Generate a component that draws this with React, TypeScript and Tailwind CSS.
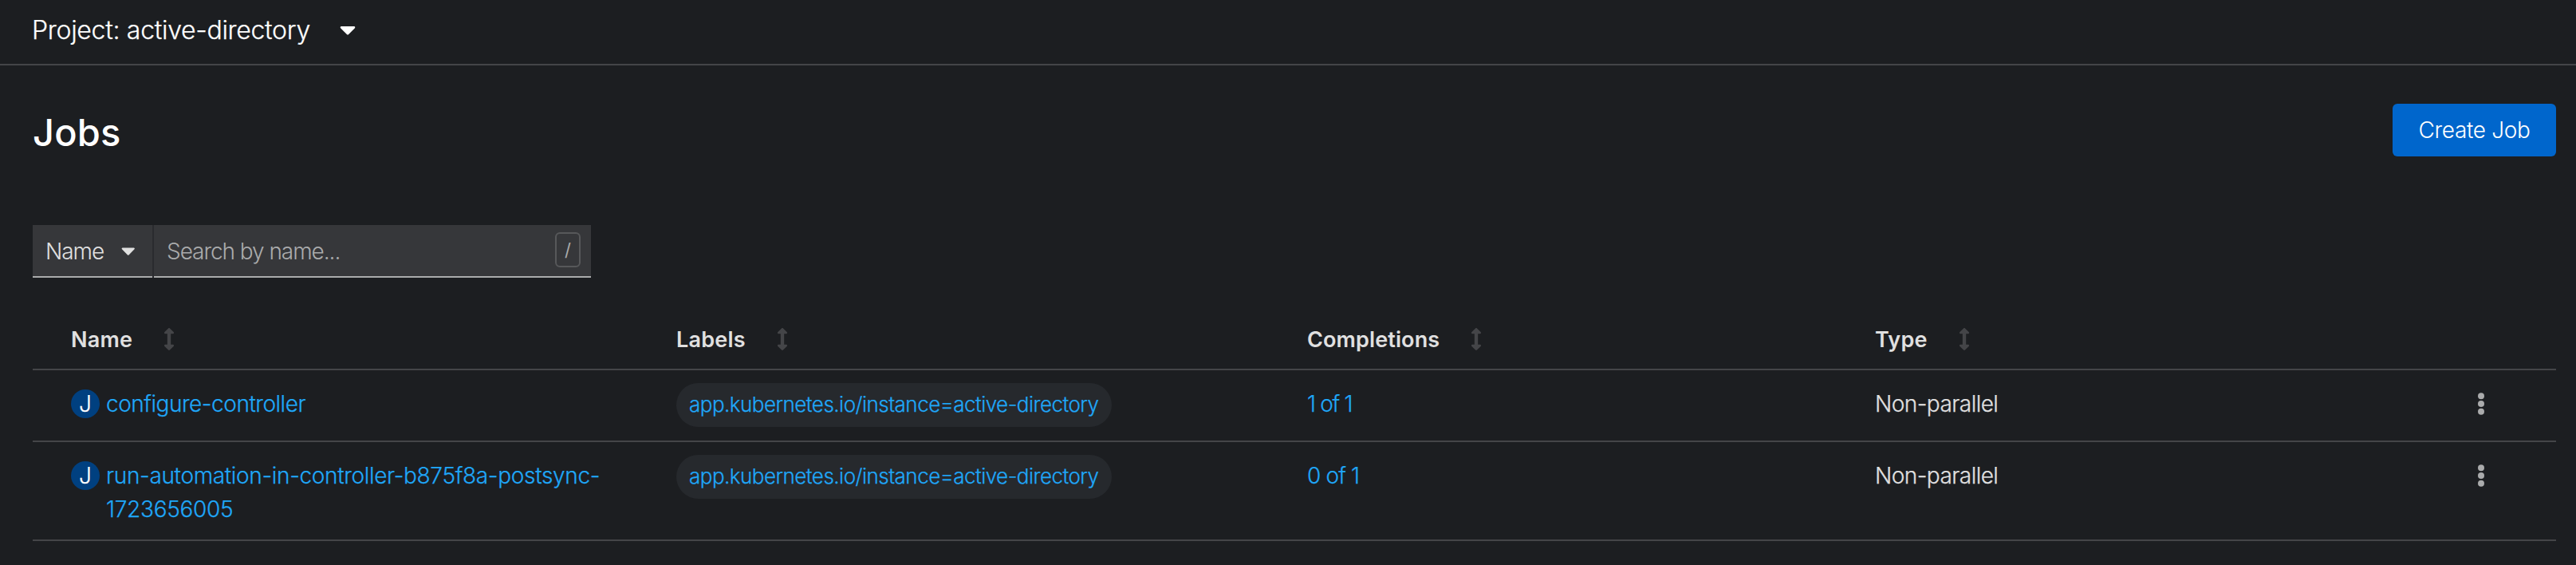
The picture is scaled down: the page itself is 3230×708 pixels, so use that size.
import React from "react";
import { FaArrowsAltV, FaCaretDown } from "react-icons/fa";

const COLUMNS = "grid grid-cols-[759px_791px_712px_756px_1fr] border-b-2 border-[#444548] pl-12";

const HEADERS = [
  { label: "Name", width: "w-[117px]", tracking: "tracking-[0.2px]" },
  { label: "Labels", width: "w-[127px]", tracking: "tracking-[0.2px]" },
  { label: "Completions", width: "w-[206px]", tracking: "tracking-[0.12px]" },
  { label: "Type", width: "w-[106px]", tracking: "tracking-[0.2px]" },
];

type Job = {
  name: string[];
  nameTracking: string[];
  label: string;
  completions: string;
  completionsTracking: string;
  type: string;
  height: string;
};

const JOBS: Job[] = [
  {
    name: ["configure-controller"],
    nameTracking: ["tracking-[-0.47px]"],
    label: "app.kubernetes.io/instance=active-directory",
    completions: "1 of 1",
    completionsTracking: "tracking-[-1.3px]",
    type: "Non-parallel",
    height: "h-[90px]",
  },
  {
    name: ["run-automation-in-controller-b875f8a-postsync-", "1723656005"],
    nameTracking: ["tracking-[-0.33px]", "tracking-[-0.3px]"],
    label: "app.kubernetes.io/instance=active-directory",
    completions: "0 of 1",
    completionsTracking: "tracking-[-0.86px]",
    type: "Non-parallel",
    height: "h-[124px]",
  },
];

function Kebab() {
  return (
    <svg className="mt-[7px] h-7 w-2 fill-[#aaabac]" viewBox="0 0 8 28">
      <circle cx="4" cy="4.3" r="4" />
      <circle cx="4" cy="14" r="4" />
      <circle cx="4" cy="23.7" r="4" />
    </svg>
  );
}

function JobRow({ job }: { job: Job }) {
  return (
    <div className={`${COLUMNS} ${job.height} items-start pt-[21px] text-[28px] leading-[42px] font-light [-webkit-text-stroke:0.25px]`}>
      <div className="flex gap-2 text-[#1fa7f8]">
        <span className="mt-[3px] flex size-9 shrink-0 items-center justify-center rounded-full bg-[#004080] leading-9 text-white">
          J
        </span>
        <a className="whitespace-nowrap">
          {job.name.map((line, i) => (
            <span key={line} className={`block ${job.nameTracking[i]}`}>
              {line}
            </span>
          ))}
        </a>
      </div>
      <div className="-mt-[5px]">
        <a className="flex h-[55px] w-[546px] items-center rounded-full bg-[#26292d] pb-px pl-4 text-[26px] tracking-[-0.53px] whitespace-nowrap text-[#1fa7f8]">
          {job.label}
        </a>
      </div>
      <a className={`text-[#1fa7f8] ${job.completionsTracking}`}>{job.completions}</a>
      <span className="tracking-[-0.54px]">{job.type}</span>
      <Kebab />
    </div>
  );
}

export default function App() {
  return (
    <div className="h-[708px] w-[3230px] overflow-hidden bg-[#1c1e21] font-['Inter',sans-serif] text-[#e0e0e0]">
      <header className="flex h-[82px] items-start gap-[37px] border-b-2 border-[#444548] pt-[13px] pl-10 text-white">
        <span className="w-[349px] text-[32px] leading-[49px] font-light tracking-[-0.3px] whitespace-nowrap [-webkit-text-stroke:0.25px]">
          Project: active-directory
        </span>
        <FaCaretDown className="mt-2 h-8 w-5" />
      </header>

      <main className="pr-[25px] pl-[41px]">
        <div className="flex items-start justify-between pt-12">
          <h1 className="pt-1.5 text-[47px] leading-[60px] font-medium tracking-[0.2px] text-white">Jobs</h1>
          <button className="h-[66px] w-[205px] rounded-md bg-[#0066cc] text-[28px] leading-[66px] font-light tracking-[-0.34px] text-white">
            Create Job
          </button>
        </div>

        <div className="mt-[86px] flex h-[66px] w-[700px] bg-[#36373a] text-[28px] leading-[66px] font-light">
          <button className="flex w-[150px] border-b-2 border-[#aaabac] pl-4">
            <span className="w-[95px] text-left tracking-[-1.02px]">Name</span>
            <FaCaretDown className="mt-[18px] h-7 w-[17.5px]" />
          </button>
          <div className="w-0.5 bg-[#2a2b2f]" />
          <div className="flex flex-1 justify-between border-b-2 border-[#aaabac] pr-[13px] pl-4 text-[#aaabac]">
            <span className="tracking-[-1.05px]">Search by name...</span>
            <kbd className="mt-[9px] flex h-11 w-8 items-center justify-center rounded-md border-2 border-[#57585a] font-['Inter',sans-serif] text-[22px] leading-none font-normal">
              /
            </kbd>
          </div>
        </div>

        <div className="mt-[34px]">
          <div className={`${COLUMNS} h-[82px] pt-[23px]`}>
            {HEADERS.map((h) => (
              <div key={h.label} className="flex text-[27px] leading-[42px] font-semibold">
                <span className={`${h.width} ${h.tracking}`}>{h.label}</span>
                <FaArrowsAltV className="-ml-px mt-[6px] h-7 w-3.5 text-[#444548]" />
              </div>
            ))}
          </div>
          {JOBS.map((job) => (
            <JobRow key={job.name[0]} job={job} />
          ))}
        </div>
      </main>
    </div>
  );
}
